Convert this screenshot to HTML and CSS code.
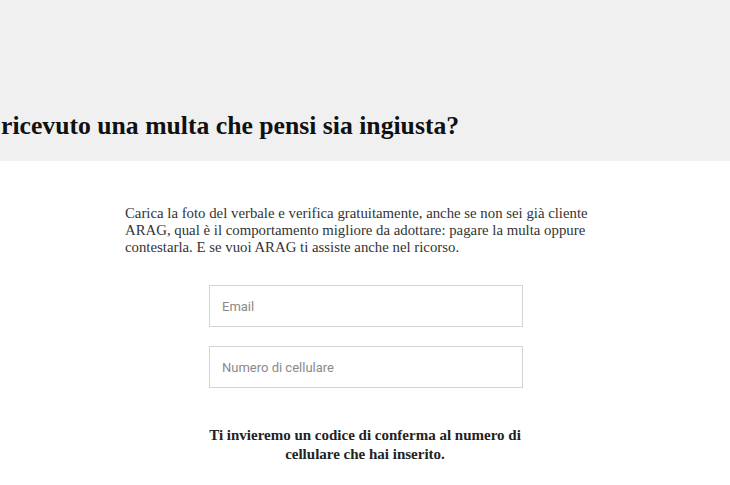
FILE: index.html
```html
<!DOCTYPE html>
<html lang="it">
<head>
<meta charset="utf-8">
<link rel="stylesheet" href="styles.css">
</head>
<body>
<header class="hero">
  <h1 class="hero-title">ricevuto una multa che pensi sia ingiusta?</h1>
</header>
<main class="content">
  <p class="intro">Carica la foto del verbale e verifica gratuitamente, anche se non sei già cliente ARAG, qual è il comportamento migliore da adottare: pagare la multa oppure contestarla. E se vuoi ARAG ti assiste anche nel ricorso.</p>
  <form class="form">
    <input class="field" type="email" placeholder="Email">
    <input class="field" type="tel" placeholder="Numero di cellulare">
  </form>
  <p class="note">Ti invieremo un codice di conferma al numero di<br>cellulare che hai inserito.</p>
</main>
</body>
</html>
```
FILE: styles.css
```css
html, body {
  margin: 0;
  padding: 0;
  background: #fff;
}
body {
  font-family: "Liberation Serif", "DejaVu Serif", serif;
  color: #222;
}
.hero {
  background: #f0f0f0;
  height: 161px;
  display: flex;
  align-items: flex-end;
  box-sizing: border-box;
}
.hero-title {
  margin: 0 0 20px 1px;
  font-size: 25.7px;
  font-weight: 700;
  color: #111;
  line-height: 30px;
}
.content {
  display: flex;
  flex-direction: column;
  align-items: center;
}
.intro {
  width: 480px;
  box-sizing: border-box;
  margin: 44px 0 0 0;
  font-size: 14.8px;
  line-height: 17px;
  color: #333;
}
.form {
  display: flex;
  flex-direction: column;
  gap: 19px;
  margin: 29px 0 0 2px;
}
.field {
  width: 314px;
  height: 42px;
  box-sizing: border-box;
  border: 1px solid #d4d4d4;
  padding: 0 12px;
  font-family: Roboto, "Liberation Sans", sans-serif;
  font-size: 13px;
  color: #333;
  outline: none;
}
.field::placeholder {
  color: #8a8a8a;
}
.note {
  margin: 38px 0 0 0;
  text-align: center;
  font-weight: 700;
  font-size: 15px;
  line-height: 19px;
  color: #222;
}
```
